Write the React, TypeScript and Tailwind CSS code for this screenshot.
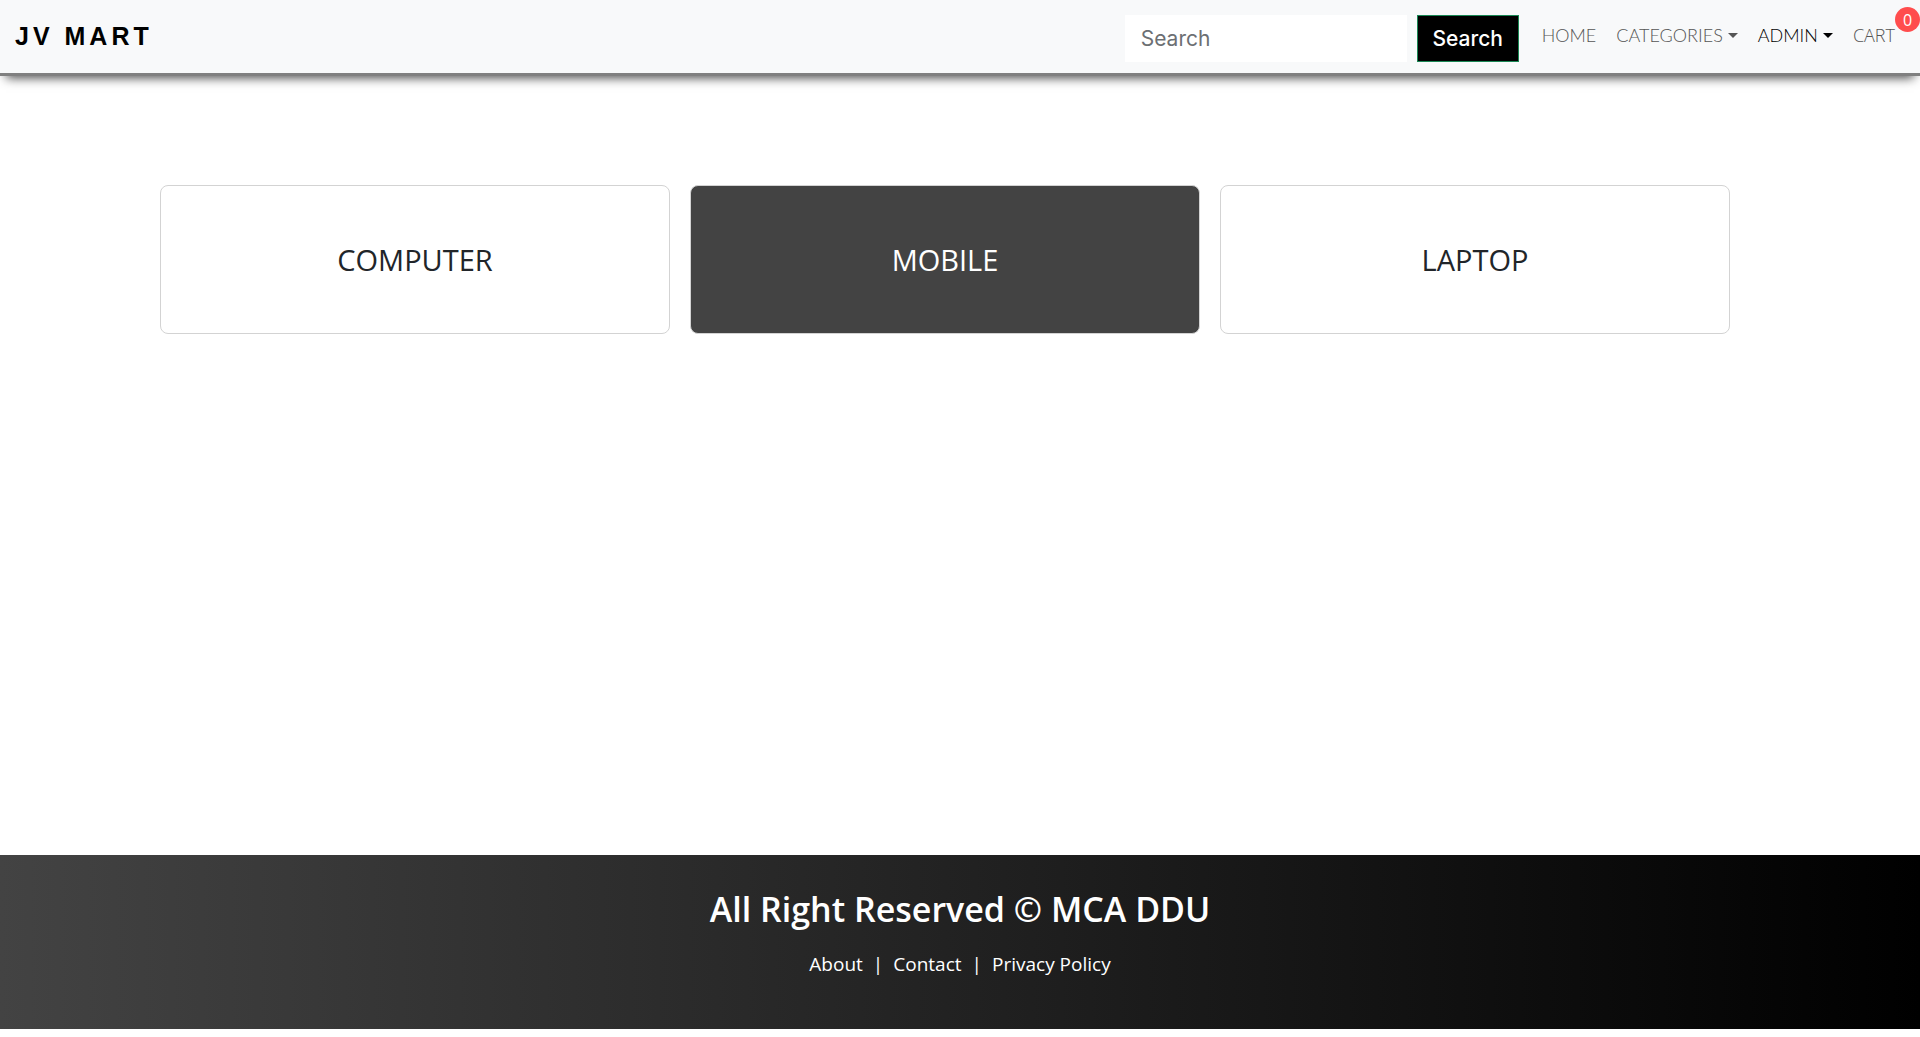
const navLink = "flex items-center gap-[5px] font-['Lato'] text-lg leading-6 font-light";
const card = "flex h-[149px] items-center justify-center rounded-lg border border-[#d3d3d3] text-[29px]";

function Caret() {
  return (
    <svg aria-hidden="true" width="10" height="5" viewBox="0 0 10 5" fill="currentColor">
      <path d="M0 0h10L5 5z" />
    </svg>
  );
}

function Header() {
  return (
    <header className="flex items-start justify-between border-b-3 border-[#808080] bg-[#f8f9fa] pt-[15px] pr-[25px] pb-[11px] pl-[15px] shadow-[0_8px_10px_-6px_#000000b3]">
      <a href="#" className="pt-[5px] font-['Liberation_Sans'] text-[25px] leading-8 font-bold tracking-[4px] text-black">
        JV MART
      </a>
      <div className="flex items-start">
        <form className="mr-[23px] flex gap-[10px]" onSubmit={(e) => e.preventDefault()}>
          <input
            type="search"
            aria-label="Search"
            placeholder="Search"
            className="h-[47px] w-[282px] bg-white px-4 font-['Inter'] text-[21px] text-[#212529] outline-none placeholder:text-[#6c6f73]"
          />
          <button
            type="submit"
            className="h-[47px] w-[102px] border border-[#198754] bg-black font-['Inter'] text-[21px] font-medium text-white"
          >
            Search
          </button>
        </form>
        <nav className="flex items-center gap-5 pt-2">
          <a href="#" className={`${navLink} text-[#555]`}>HOME</a>
          <button type="button" className={`${navLink} text-[#555]`}>
            CATEGORIES
            <Caret />
          </button>
          <button type="button" className={`${navLink} text-black`}>
            ADMIN
            <Caret />
          </button>
          <a href="#" className="relative font-['Open_Sans'] text-lg leading-6 font-light text-[#555]">
            CART
            <span className="absolute -top-4 left-full flex size-[25px] items-center justify-center rounded-full bg-[#ff4d4d] font-['Open_Sans'] text-base font-normal text-white">
              0
            </span>
          </a>
        </nav>
      </div>
    </header>
  );
}

const categories = [
  { name: "COMPUTER", active: false },
  { name: "MOBILE", active: true },
  { name: "LAPTOP", active: false },
];

export default function App() {
  return (
    <div className="flex min-h-screen flex-col bg-white pb-2 font-['Open_Sans',sans-serif]">
      <Header />
      <main className="grid grow grid-cols-3 items-start gap-5 pt-[109px] pr-[190px] pl-40">
        {categories.map((c) => (
          <a
            key={c.name}
            href="#"
            className={c.active ? `${card} bg-[#434343] text-white` : `${card} bg-white text-[#212529]`}
          >
            {c.name}
          </a>
        ))}
      </main>
      <footer className="flex flex-col items-center bg-linear-to-r/srgb from-[#434343] to-black pt-8 pb-[50px] text-white">
        <h1 className="text-[34px] leading-11 font-semibold">All Right Reserved © MCA DDU</h1>
        <p className="mt-[18px] flex gap-[10px] text-[19px] leading-[30px]">
          <a href="#">About</a>
          <span>|</span>
          <a href="#">Contact</a>
          <span>|</span>
          <a href="#">Privacy Policy</a>
        </p>
      </footer>
    </div>
  );
}
